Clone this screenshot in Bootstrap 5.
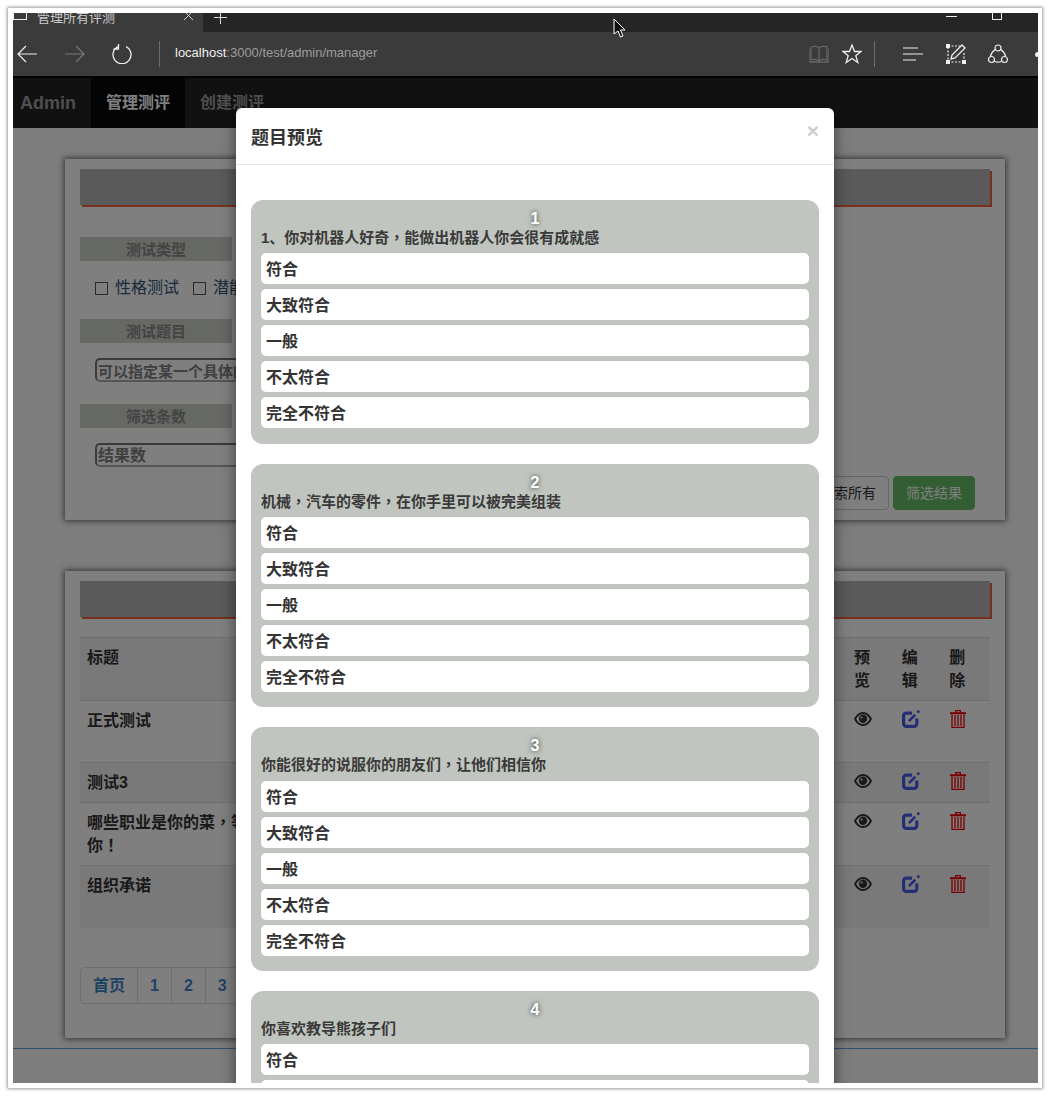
<!DOCTYPE html>
<html lang="zh-CN">

<head>
    <meta charset="UTF-8">
    <meta name="viewport" content="width=device-width, initial-scale=1.0">
    <title>管理所有评测</title>
    <link href="https://cdn.jsdelivr.net/npm/bootstrap@5.3.0/dist/css/bootstrap.min.css" rel="stylesheet">
    <style>
        html, body { height: 100%; overflow: hidden; background: #fff; }
        body { font-family: "Liberation Sans", "Noto Sans CJK SC", sans-serif; color: #333; }
        .mid-punct { font-family: "Noto Sans CJK TC", sans-serif; line-height: 1; }

        .shot-frame { width: 1034px; height: 1080px; margin: 8px 0 0 8px; padding: 5px 4px 5px 5px; background: #fff; box-shadow: 0 0 3px 1px #999; }
        .browser-win { position: relative; height: 1070px; overflow: hidden; }

        /* browser chrome */
        .tab-strip { height: 19px; background: #252525; color: #ddd; overflow: hidden; }
        .tab-active { width: 190px; height: 19px; background: #3b3b3b; padding-right: 9px; font-size: 13px; line-height: 17px; }
        .tab-box { width: 14px; height: 7px; border: 1px solid #eee; border-top: 0; margin-right: 10px; }
        .tab-label { color: #ccc; margin-top: -4px; }
        .tab-x { margin-top: -2px; }
        .tab-plus { margin-left: 11px; width: 13px; height: 13px; margin-top: -2px; }
        .win-min { width: 11px; height: 1px; background: #eee; margin-top: 3px; }
        .win-max { width: 10px; height: 7px; border: 1px solid #eee; border-top: 0; margin-left: 35px; margin-right: 36px; }
        .tool-bar { height: 44px; background: #3b3b3b; padding-left: 4px; }
        .tool-sep { width: 1px; height: 26px; background: #6e6e6e; }
        .url-text { font-size: 13px; color: #9b9b9b; margin-left: 15px; margin-top: -3px; }
        .url-text b { font-weight: 400; color: #eee; }
        .edge-line { height: 2px; background: #000; }
        .mouse-pointer { position: absolute; left: 600px; top: 5px; }

        /* page under the modal */
        .page-area { position: relative; height: 1005px; overflow: hidden; background: #fafafa; }
        .top-nav { height: 50px; background: #222; font-weight: 700; font-size: 16px; color: #9d9d9d; }
        .nav-brand { font-size: 18px; padding: 0 15px 0 7px; }
        .nav-item-on { background: #080808; color: #fff; padding: 0 15px; line-height: 50px; }
        .nav-item-off { padding: 0 15px; line-height: 50px; }

        .sheet { width: 940px; margin-left: 52px; padding: 10px 15px; background: #fff; box-shadow: 0 0 6px 1px rgba(0, 0, 0, .6); }
        .sheet-form { height: 361px; margin-top: 31px; }
        .sheet-list { height: 467px; margin-top: 51px; }
        .sheet-head { height: 36px; background: #b4b4b4; box-shadow: 2px 2px 0 #f0603a; }

        .field-label { width: 152px; height: 24px; line-height: 26px; background: #cdd0c8; color: #888; font-size: 15px; font-weight: 700; text-align: center; }
        .first-label { margin-top: 32px; }
        .check-row { height: 58px; padding: 0 0 4px 15px; font-size: 16px; color: #2f5378; }
        .check-box { width: 13px; height: 13px; border: 1px solid #555; margin-right: 7px; }
        .check-gap { margin-left: 14px; }
        .fake-input { width: 320px; height: 24px; margin: 15px 0 22px 15px; padding: 0 1px; border: 2px solid #777; border-right-color: #bbb; border-bottom-color: #aaa; border-radius: 5px; background: #fff; font-size: 16px; font-weight: 700; color: #808080; line-height: 21px; white-space: nowrap; overflow: hidden; }
        .hint-input { font-size: 15px; line-height: 23px; }
        .count-input { margin-top: 15px; }
        .btn-row { margin-top: -13px; padding-right: 15px; }
        .btn-row .btn { height: 34px; padding: 0 12px; font-size: 14px; line-height: 32px; border-radius: 4px; }
        .btn-plain { background: #fff; border: 1px solid #ccc; color: #333; width: 100px; text-align: right; }
        .btn-green { background: #66bb66; border: 1px solid #66bb66; color: #fff; margin-left: 4px; }

        .list-table { margin: 20px 0 39px; border-top: 1px solid #ddd; font-size: 16px; font-weight: 700; table-layout: fixed; }
        .list-table > :not(caption) > * > * { padding: 9px 8px 7px 7px; border-bottom: 1px solid #ddd; line-height: 22.86px; vertical-align: top; background: transparent; color: #333; }
        .list-table tr.tint-row > * { background: #f2f2f2; }
        .list-table tbody tr:last-child > * { border-bottom: 0; }
        .list-table > thead > tr > th.action-col { width: 47.7px; padding-right: 12px; }
        .tall-row > * { height: 62.7px; }
        .low-row > * { height: 40px; }
        .list-table svg { display: block; }

        .pager { margin: 0; font-size: 16px; font-weight: 700; --bs-pagination-padding-x: 12px; --bs-pagination-padding-y: 0; --bs-pagination-color: #3f83c4; --bs-pagination-font-size: 16px; --bs-pagination-border-color: #ddd; --bs-pagination-border-radius: 4px; }
        .pager .page-link { height: 37px; line-height: 35px; }

        .page-foot { margin-top: 10px; border-top: 1px solid #5b9ee0; }
        .dim-layer { position: absolute; inset: 0; background: #000; opacity: .5; }

        /* preview modal */
        .preview-box { position: absolute; left: 223px; top: 30px; width: 598px; background: #fff; border: 0; border-radius: 6px; box-shadow: 0 5px 15px rgba(0, 0, 0, .5); }
        .preview-box .modal-header { height: 57px; padding: 15px; border-bottom: 1px solid #e5e5e5; align-items: flex-start; }
        .preview-box .modal-title { font-size: 18px; font-weight: 700; line-height: 30px; color: #333; }
        .close-x { border: 0; background: none; padding: 0; margin-top: -4px; font-size: 21px; font-weight: 700; line-height: 24px; color: #ccc; }
        .preview-box .modal-body { padding: 35px 15px 15px; }
        .q-card { height: 243.67px; margin-bottom: 20px; padding: 8px 10px 0; background: #c1c5c0; border-radius: 12px; }
        .q-num { height: 21px; line-height: 21px; text-align: center; font-size: 16px; font-weight: 700; color: #fff; text-shadow: 0 0 5px #333; }
        .q-text { height: 24.3px; line-height: 17px; font-size: 15px; font-weight: 700; color: #3a3a3a; }
        .q-opt { height: 31px; margin-bottom: 5px; padding-left: 5px; line-height: 33px; background: #fff; border-radius: 5px; font-size: 16px; font-weight: 700; color: #333; }
    </style>
</head>

<body>
    <svg width="0" height="0" class="d-block">
        <symbol id="ico-eye" viewBox="0 0 18 14">
            <path fill="#333" fill-rule="evenodd" d="M9 0C5 0 2 3 0 7c2 4 5 7 9 7s7-3 9-7c-2-4-5-7-9-7zm0 2c3 0 5.300 2 6.800 5-1.500 3-3.800 5-6.800 5S3.700 10 2.200 7C3.700 4 6 2 9 2z" />
            <circle cx="9" cy="6.800" r="4.200" fill="#333" />
            <circle cx="7.500" cy="5.500" r="1.300" fill="#bbb" />
        </symbol>
        <symbol id="ico-edit" viewBox="0 0 17 17">
            <path fill="none" stroke="#4a5cea" stroke-width="3" stroke-linejoin="round" d="M9.500 3H4a2.500 2.500 0 0 0-2.500 2.500V13A2.500 2.500 0 0 0 4 15.500h7.500A2.500 2.500 0 0 0 14 13V8" />
            <path fill="none" stroke="#4a5cea" stroke-width="2.400" d="M6.500 10.500 12.500 4.500" />
            <circle cx="15.400" cy="1.600" r="1.400" fill="#4a5cea" />
        </symbol>
        <symbol id="ico-trash" viewBox="0 0 16 18">
            <path fill="#f00000" d="M0 2.300h16V4.300H0zM5 0h6v2.500H9.800V1.200H6.200v1.300H5z" />
            <path fill="none" stroke="#f00000" stroke-width="1.300" d="M2 4.500v13h12v-13M5 5v11M8 5v11M11 5v11" />
        </symbol>
    </svg>

    <div class="shot-frame">
        <div class="browser-win">
            <div class="tab-strip d-flex align-items-start">
                <div class="tab-active d-flex align-items-start justify-content-between">
                    <span class="d-flex align-items-start"><span class="tab-box"></span><span class="tab-label">管理所有评测</span></span>
                    <svg class="tab-x" width="10" height="10" viewBox="0 0 10 10"><path stroke="#ccc" d="M0 0l9 9M9 0L0 9" /></svg>
                </div>
                <svg class="tab-plus" viewBox="0 0 13 13"><path stroke="#ddd" d="M6.500 0v13M0 6.500h13" /></svg>
                <div class="ms-auto d-flex align-items-start"><span class="win-min"></span><span class="win-max"></span></div>
            </div>

            <div class="tool-bar d-flex align-items-center">
                <svg width="20" height="18" viewBox="0 0 20 18"><path fill="none" stroke="#eee" stroke-width="1.200" d="M20 9H1M9 1 1 9l8 8" /></svg>
                <svg width="20" height="18" viewBox="0 0 20 18" style="margin-left:28px"><path fill="none" stroke="#777" stroke-width="1.200" d="M0 9h19M11 1l8 8-8 8" /></svg>
                <svg width="20" height="20" viewBox="0 0 20 20" style="margin-left:27px"><path fill="none" stroke="#eee" stroke-width="1.300" d="M6 2.600a9 9 0 1 0 8 0M6.500 0v5H1.500" /></svg>
                <span class="tool-sep" style="margin-left:27px"></span>
                <span class="url-text"><b>localhost</b>:3000/test/admin/manager</span>
                <div class="ms-auto d-flex align-items-center">
                    <svg width="20" height="18" viewBox="0 0 20 18"><path fill="none" stroke="#666" stroke-width="1.300" d="M10 3C8 1 4 1 2 2v13c2-1 6-1 8 1 2-2 6-2 8-1V2c-2-1-6-1-8 1zm0 0v13M0 4v13h20V4" /></svg>
                    <svg width="20" height="20" viewBox="0 0 20 20" style="margin-left:13px"><path fill="none" stroke="#eee" stroke-width="1.300" d="m10 1 2.500 6.500H19l-5.200 4.200 2 6.800L10 14.500 4.200 18.500l2-6.800L1 7.500h6.500z" /></svg>
                    <span class="tool-sep" style="margin-left:12px"></span>
                    <svg width="20" height="14" viewBox="0 0 20 14" style="margin-left:28px"><path stroke="#eee" stroke-width="1.200" d="M0 1h15M0 7h20M0 13h13" /></svg>
                    <svg width="20" height="20" viewBox="0 0 20 20" style="margin-left:23px"><path fill="none" stroke="#eee" stroke-width="1.200" stroke-dasharray="2 1.500" d="M2 2h14M2 18h16M2 3v15M18 9v9" /><path fill="#eee" d="M0 0h4v4H0zM0 16h4v4H0zM16 16h4v4h-4z" /><path fill="none" stroke="#eee" stroke-width="1.300" d="M16 1l3 3-10 10-4 1 1-4z" /></svg>
                    <svg width="20" height="20" viewBox="0 0 20 20" style="margin-left:22px"><g fill="none" stroke="#eee" stroke-width="1.200"><circle cx="10" cy="4" r="3" /><path d="M7.300 5.500C4.500 7.500 3 9.500 2.300 12.500M12.700 5.500C15.500 7.500 17 9.500 17.700 12.500" /><circle cx="3.500" cy="15.500" r="3" /><circle cx="16.500" cy="15.500" r="3" /><path d="M6.500 17.500c2 .8 5 .8 7 0" /></g></svg>
                    <span class="rounded-circle" style="width:5px;height:5px;background:#eee;margin-left:27px;margin-right:-2px"></span>
                </div>
            </div>
            <div class="edge-line"></div>

            <div class="page-area">
                <nav class="top-nav d-flex align-items-center">
                    <span class="nav-brand">Admin</span>
                    <span class="nav-item-on">管理测评</span>
                    <span class="nav-item-off">创建测评</span>
                </nav>

                <section class="sheet sheet-form">
                    <div class="sheet-head"></div>
                    <div class="field-label first-label">测试类型</div>
                    <div class="check-row d-flex align-items-center">
                        <span class="check-box"></span>性格测试
                        <span class="check-box check-gap"></span>潜能测试
                    </div>
                    <div class="field-label">测试题目</div>
                    <div class="fake-input hint-input">可以指定某一个具体的题目</div>
                    <div class="field-label">筛选条数</div>
                    <div class="fake-input count-input">结果数</div>
                    <div class="btn-row d-flex justify-content-end">
                        <button class="btn btn-plain">搜索所有</button>
                        <button class="btn btn-green">筛选结果</button>
                    </div>
                </section>

                <section class="sheet sheet-list">
                    <div class="sheet-head"></div>
                    <table class="table list-table">
                        <thead>
                            <tr class="tint-row tall-row">
                                <th>标题</th>
                                <th class="action-col">预览</th>
                                <th class="action-col">编辑</th>
                                <th class="action-col">删除</th>
                            </tr>
                        </thead>
                        <tbody id="testRows"></tbody>
                    </table>
                    <ul class="pagination pager">
                        <li class="page-item"><a class="page-link" href="#">首页</a></li>
                        <li class="page-item"><a class="page-link" href="#">1</a></li>
                        <li class="page-item"><a class="page-link" href="#">2</a></li>
                        <li class="page-item"><a class="page-link" href="#">3</a></li>
                    </ul>
                </section>
                <div class="page-foot"></div>

                <div class="dim-layer"></div>

                <div class="modal-content preview-box">
                    <div class="modal-header">
                        <h5 class="modal-title">题目预览</h5>
                        <button type="button" class="close-x ms-auto">×</button>
                    </div>
                    <div class="modal-body" id="questionList"></div>
                </div>
            </div>

            <svg class="mouse-pointer" width="14" height="21" viewBox="0 0 14 21"><path fill="#111" stroke="#fff" d="M1 1v15l4-3 2.500 6 2.500-1-2.500-6H12z" /></svg>
        </div>
    </div>

    <script src="https://cdn.jsdelivr.net/npm/bootstrap@5.3.0/dist/js/bootstrap.bundle.min.js"></script>
    <script>
        const tests = [
            { title: "正式测试", rowClass: "tall-row" },
            { title: "测试3", rowClass: "tint-row low-row" },
            { title: "哪些职业是你的菜，等<br>你！", rowClass: "tall-row" },
            { title: "组织承诺", rowClass: "tint-row tall-row" }
        ];
        const questions = [
            "1、你对机器人好奇，能做出机器人你会很有成就感",
            "机械，汽车的零件，在你手里可以被完美组装",
            "你能很好的说服你的朋友们，让他们相信你",
            "你喜欢教导熊孩子们"
        ];
        const answers = ["符合", "大致符合", "一般", "不太符合", "完全不符合"];

        // the reference sets ， and ！ in the middle of the cell, as the TC font does
        function midPunct(text) {
            return text.replace(/[，！]/g, '<span class="mid-punct" lang="zh-TW">$&</span>');
        }

        function icon(name) {
            return `<td><svg width="18" height="18"><use href="#${name}" /></svg></td>`;
        }

        document.getElementById('testRows').innerHTML = tests.map(t => `
            <tr class="${t.rowClass}">
                <td>${midPunct(t.title)}</td>
                ${icon('ico-eye')}${icon('ico-edit')}${icon('ico-trash')}
            </tr>`).join('');

        document.getElementById('questionList').innerHTML = questions.map((q, i) => `
            <div class="q-card">
                <div class="q-num">${i + 1}</div>
                <div class="q-text">${midPunct(q)}</div>
                ${answers.map(a => `<div class="q-opt">${a}</div>`).join('')}
            </div>`).join('');
    </script>
</body>

</html>
